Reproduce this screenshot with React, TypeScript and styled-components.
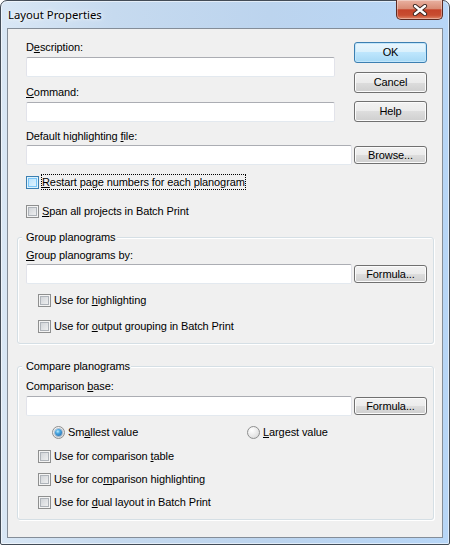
import styled, { createGlobalStyle } from 'styled-components'

const GlobalStyle = createGlobalStyle`
    html, body {
        margin: 0;
        padding: 0;
        background: #fff;
    }
    body {
        font-family: "Liberation Sans", Arial, sans-serif;
        font-size: 11px;
        letter-spacing: -0.1px;
        color: #000;
    }
    * {
        box-sizing: border-box;
    }
`

const Window = styled.div`
    width: 450px;
    height: 545px;
    border: 1px solid #434c57;
    border-radius: 7px 7px 2px 2px;
    background: linear-gradient(90deg, #d9e7f5 0%, #c6daef 25%, #bcd4ee 60%, #b7d6f7 100%);
    box-shadow: inset 0 0 0 1px rgba(255, 255, 255, 0.55);
    padding: 0 6px 6px;
    display: flex;
    flex-direction: column;
`

const TitleBar = styled.div`
    height: 27px;
    display: flex;
    justify-content: space-between;
    align-items: flex-start;
`

const Title = styled.div`
    font-family: "Noto Sans", "Liberation Sans", sans-serif;
    font-size: 11.3px;
    letter-spacing: 0;
    line-height: 16px;
    padding: 6px 0 0 1px;
    text-shadow: 0 0 6px #fff, 0 0 3px #fff;
`

const CloseButton = styled.div`
    width: 47px;
    height: 20px;
    margin-top: -1px;
    border: 1px solid #5e2b22;
    border-top: none;
    border-radius: 0 0 5px 5px;
    background: linear-gradient(#e9b1a1 0%, #d98c75 45%, #c5432a 52%, #c84d31 80%, #df8466 100%);
    box-shadow: inset 0 0 0 1px rgba(255, 255, 255, 0.35);
    display: flex;
    align-items: center;
    justify-content: center;
    svg {
        display: block;
    }
`

const Client = styled.div`
    flex: 1;
    background: #f0f0f0;
    border: 1px solid #848d98;
    padding: 12px 8px 0 9px;
    display: flex;
    flex-direction: column;
`

const TopSection = styled.div`
    padding: 0 7px 0 9px;
`

const TopRow = styled.div`
    display: flex;
    justify-content: space-between;
`

const Fields = styled.div`
    width: 309px;
`

const ButtonStack = styled.div`
    width: 73px;
    padding-top: 1px;
    display: flex;
    flex-direction: column;
    gap: 8px;
`

const Label = styled.div<{ $mt?: number; $gap?: number }>`
    line-height: 13px;
    white-space: nowrap;
    margin-top: ${({ $mt }) => $mt ?? 0}px;
    margin-bottom: ${({ $gap }) => $gap ?? 3}px;
`

const TextBox = styled.input`
    display: block;
    width: 100%;
    min-width: 0;
    height: 20px;
    margin: 0;
    padding: 0 3px;
    background: #fff;
    border: 1px solid #e2e3ea;
    border-top-color: #abadb3;
    border-bottom-color: #e3e9ef;
    border-radius: 2px;
    font: inherit;
    outline: none;
`

const FieldRow = styled.div`
    display: flex;
    align-items: center;
    gap: 2px;
    ${TextBox} {
        flex: 1;
    }
`

const Button = styled.button<{ $primary?: boolean; $small?: boolean }>`
    flex: none;
    width: 73px;
    height: ${({ $small }) => ($small ? 18 : 21)}px;
    margin: 0 0 ${({ $primary }) => ($primary ? 1 : 0)}px;
    padding: 0;
    font: inherit;
    letter-spacing: inherit;
    color: #000;
    line-height: 1;
    border: 1px solid ${({ $primary }) => ($primary ? '#3c7fb1' : '#707070')};
    border-radius: 3px;
    background: ${({ $primary }) =>
        $primary
            ? 'linear-gradient(#eaf6fd 0%, #d9f0fc 50%, #bee6fd 50%, #a7d9f5 100%)'
            : 'linear-gradient(#f2f2f2 0%, #ebebeb 50%, #dddddd 50%, #cfcfcf 100%)'};
    box-shadow: inset 0 0 0 1px ${({ $primary }) => ($primary ? '#c2e6fb' : '#fbfbfb')};
`

const CheckRow = styled.div<{ $mt: number; $indent?: number }>`
    display: flex;
    align-items: center;
    height: 16px;
    margin-top: ${({ $mt }) => $mt}px;
    padding-left: ${({ $indent }) => $indent ?? 0}px;
    white-space: nowrap;
`

const CheckBox = styled.span<{ $hover?: boolean }>`
    flex: none;
    width: 13px;
    height: 13px;
    border: 1px solid ${({ $hover }) => ($hover ? '#3c7fb1' : '#8e8f8f')};
    background: ${({ $hover }) =>
        $hover
            ? 'linear-gradient(135deg, #b1dffd 0%, #e9f7fe 100%)'
            : 'linear-gradient(135deg, #c9cdd2 0%, #f6f6f6 100%)'};
    box-shadow: inset 0 0 0 1px ${({ $hover }) => ($hover ? '#def3fd' : '#f4f4f4')},
        inset 0 0 0 2px ${({ $hover }) => ($hover ? '#79c6f9' : '#aeb3b9')};
`

const CheckText = styled.span<{ $focus?: boolean }>`
    margin-left: 2px;
    line-height: 14px;
    border: 1px dotted ${({ $focus }) => ($focus ? '#000' : 'transparent')};
`

const Group = styled.fieldset<{ $mt: number; $pt: number }>`
    margin: ${({ $mt }) => $mt}px 0 0;
    padding: ${({ $pt }) => $pt}px 6px 9px 8px;
    min-width: 0;
    border: 1px solid #d5dfe5;
    border-radius: 3px;
    box-shadow: inset 1px 1px 0 #fff, 1px 1px 0 #fff;

    legend {
        margin-left: -4px;
        padding: 0 1px 0 4px;
        line-height: 13px;
        background: #f0f0f0;
    }
`

const RadioRow = styled.div`
    display: flex;
    height: 16px;
    margin-top: 8px;
    padding-left: 26px;
`

const RadioItem = styled.label`
    flex: none;
    width: 195px;
    display: flex;
    align-items: center;
    white-space: nowrap;
`

const Radio = styled.span<{ $checked?: boolean }>`
    flex: none;
    width: 13px;
    height: 13px;
    border-radius: 50%;
    border: 1px solid #8e8f8f;
    background: radial-gradient(circle at 35% 30%, #ffffff 0%, #e6e6e6 60%, #cfcfcf 100%);
    display: flex;
    align-items: center;
    justify-content: center;
    &::after {
        content: '';
        display: ${({ $checked }) => ($checked ? 'block' : 'none')};
        width: 7px;
        height: 7px;
        border-radius: 50%;
        background: radial-gradient(circle at 40% 35%, #b9ecff 0%, #49a6e0 35%, #1b5fa3 100%);
        box-shadow: 0 0 0 1px rgba(40, 90, 140, 0.35);
    }
`

const RadioText = styled.span`
    margin-left: 3px;
    line-height: 14px;
`

const Stack = styled.div<{ $gap: number; $mt: number }>`
    display: flex;
    flex-direction: column;
    gap: ${({ $gap }) => $gap}px;
    margin-top: ${({ $mt }) => $mt}px;
`

export default function App() {
    return (
        <>
            <GlobalStyle />
            <Window>
                <TitleBar>
                    <Title>Layout Properties</Title>
                    <CloseButton>
                        <svg width="16" height="12" viewBox="0 0 16 12">
                            <path d="M3 2 L13 10 M13 2 L3 10" stroke="#3b2520" strokeWidth="4.2" strokeLinecap="round" />
                            <path d="M3 2 L13 10 M13 2 L3 10" stroke="#fff" strokeWidth="2.4" strokeLinecap="round" />
                        </svg>
                    </CloseButton>
                </TitleBar>
                <Client>
                    <TopSection>
                        <TopRow>
                            <Fields>
                                <Label>
                                    D<u>e</u>scription:
                                </Label>
                                <TextBox readOnly />
                                <Label $mt={9}>
                                    <u>C</u>ommand:
                                </Label>
                                <TextBox readOnly />
                            </Fields>
                            <ButtonStack>
                                <Button $primary>OK</Button>
                                <Button>Cancel</Button>
                                <Button>Help</Button>
                            </ButtonStack>
                        </TopRow>
                        <Label $mt={8} $gap={2}>
                            Default highlighting <u>f</u>ile:
                        </Label>
                        <FieldRow>
                            <TextBox readOnly />
                            <Button $small>Browse...</Button>
                        </FieldRow>
                        <CheckRow $mt={9}>
                            <CheckBox $hover />
                            <CheckText $focus>
                                <u>R</u>estart page numbers for each planogram
                            </CheckText>
                        </CheckRow>
                        <CheckRow $mt={13}>
                            <CheckBox />
                            <CheckText>
                                <u>S</u>pan all projects in Batch Print
                            </CheckText>
                        </CheckRow>
                    </TopSection>

                    <Group $mt={12} $pt={5}>
                        <legend>Group planograms</legend>
                        <Label $gap={2}>
                            <u>G</u>roup planograms by:
                        </Label>
                        <FieldRow>
                            <TextBox readOnly />
                            <Button $small>Formula...</Button>
                        </FieldRow>
                        <Stack $gap={10} $mt={8}>
                            <CheckRow $mt={0} $indent={12}>
                                <CheckBox />
                                <CheckText>
                                    Use for <u>h</u>ighlighting
                                </CheckText>
                            </CheckRow>
                            <CheckRow $mt={0} $indent={12}>
                                <CheckBox />
                                <CheckText>
                                    Use for <u>o</u>utput grouping in Batch Print
                                </CheckText>
                            </CheckRow>
                        </Stack>
                    </Group>

                    <Group $mt={16} $pt={7}>
                        <legend>Compare planograms</legend>
                        <Label>
                            Comparison <u>b</u>ase:
                        </Label>
                        <FieldRow>
                            <TextBox readOnly />
                            <Button $small>Formula...</Button>
                        </FieldRow>
                        <RadioRow>
                            <RadioItem>
                                <Radio $checked />
                                <RadioText>
                                    Sm<u>a</u>llest value
                                </RadioText>
                            </RadioItem>
                            <RadioItem>
                                <Radio />
                                <RadioText>
                                    <u>L</u>argest value
                                </RadioText>
                            </RadioItem>
                        </RadioRow>
                        <Stack $gap={7} $mt={8}>
                            <CheckRow $mt={0} $indent={12}>
                                <CheckBox />
                                <CheckText>
                                    Use for comparison <u>t</u>able
                                </CheckText>
                            </CheckRow>
                            <CheckRow $mt={0} $indent={12}>
                                <CheckBox />
                                <CheckText>
                                    Use for co<u>m</u>parison highlighting
                                </CheckText>
                            </CheckRow>
                            <CheckRow $mt={0} $indent={12}>
                                <CheckBox />
                                <CheckText>
                                    Use for <u>d</u>ual layout in Batch Print
                                </CheckText>
                            </CheckRow>
                        </Stack>
                    </Group>
                </Client>
            </Window>
        </>
    )
}
